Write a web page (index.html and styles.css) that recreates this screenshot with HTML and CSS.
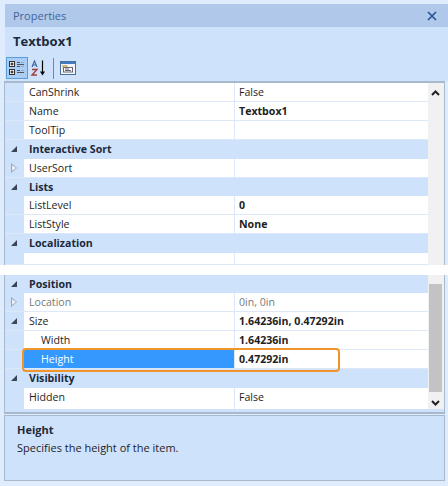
FILE: index.html
```html
<!DOCTYPE html>
<html>
  <head>
    <title>Properties</title>
    <link rel="stylesheet" href="styles.css">
  </head>
  <body>
    <div class="panel">
      <div class="title-bar">
        <span>Properties</span>
        <svg class="close" width="10" height="10" viewBox="0 0 10 10"><path d="M1 1L9 9M9 1L1 9" stroke="#2a5590" stroke-width="1.7"/></svg>
      </div>
      <div class="object-name">Textbox1</div>
      <div class="toolbar">
        <div class="tool active">
          <svg width="20" height="20" viewBox="0 0 20 20">
            <rect x="2.5" y="3.5" width="5" height="5" fill="#fff" stroke="#333"/>
            <path d="M3.5 6H6.5M5 4.5V7.5" stroke="#000"/>
            <rect x="2.5" y="11.5" width="5" height="5" fill="#fff" stroke="#333"/>
            <path d="M3.5 14H6.5M5 12.5V15.5" stroke="#000"/>
            <path d="M10 4.5H13M10 6.5H17M10 8.5H13M10 12.5H13M10 14.5H17" stroke="#555"/>
            <path d="M14 4.5H17M14 8.5H17M14 12.5H17" stroke="#9ab"/>
          </svg>
        </div>
        <div class="tool">
          <svg width="20" height="20" viewBox="0 0 20 20">
            <path d="M3 9L5.5 3L8 9M4 7H7" fill="none" stroke="#3a5f9e" stroke-width="1.1"/>
            <path d="M3 11.5H8L3 17H8" fill="none" stroke="#a04040" stroke-width="1.4"/>
            <path d="M13.5 2.5V15" stroke="#000" stroke-width="1.2"/>
            <path d="M11 13.5H16L13.5 17.5Z" fill="#000"/>
          </svg>
        </div>
        <div class="tool-sep"></div>
        <div class="tool">
          <svg width="18" height="18" viewBox="0 0 18 18">
            <rect x="1.5" y="2.5" width="15" height="13" fill="#f2f6fb" stroke="#4a6f9f"/>
            <rect x="2" y="3" width="14" height="2" fill="#3f7cc4"/>
            <path d="M3.5 6.5H8V8H3.5Z" fill="#f2d48a" stroke="#b08a3a" stroke-width=".5"/>
            <rect x="4.5" y="8.5" width="9" height="4.5" fill="#fff" stroke="#667"/>
            <path d="M6 10H10M6 11.5H12" stroke="#667"/>
          </svg>
        </div>
      </div>

      <div class="grid">
        <div class="grid-part part-top">
          <div class="rows">
            <div class="row"><div class="margin"></div><div class="name">CanShrink</div><div class="value">False</div></div>
            <div class="row"><div class="margin"></div><div class="name">Name</div><div class="value bold">Textbox1</div></div>
            <div class="row"><div class="margin"></div><div class="name">ToolTip</div><div class="value"></div></div>
            <div class="cat"><div class="margin"><i class="open"></i></div><div class="name">Interactive Sort</div></div>
            <div class="row"><div class="margin"><i class="closed"></i></div><div class="name">UserSort</div><div class="value"></div></div>
            <div class="cat"><div class="margin"><i class="open"></i></div><div class="name">Lists</div></div>
            <div class="row"><div class="margin"></div><div class="name">ListLevel</div><div class="value bold">0</div></div>
            <div class="row"><div class="margin"></div><div class="name">ListStyle</div><div class="value bold">None</div></div>
            <div class="cat"><div class="margin"><i class="open"></i></div><div class="name">Localization</div></div>
            <div class="row cut"><div class="margin"></div><div class="name"></div><div class="value"></div></div>
          </div>
          <div class="scrollbar">
            <svg class="arrow" width="9" height="6" viewBox="0 0 9 6"><path d="M1 5L4.5 1.5L8 5" fill="none" stroke="#222" stroke-width="2"/></svg>
          </div>
        </div>
        <div class="strip"></div>
        <div class="grid-part">
          <div class="rows">
            <div class="cat"><div class="margin"><i class="open"></i></div><div class="name">Position</div></div>
            <div class="row"><div class="margin"><i class="closed"></i></div><div class="name gray">Location</div><div class="value gray">0in, 0in</div></div>
            <div class="row"><div class="margin"><i class="open"></i></div><div class="name">Size</div><div class="value bold">1.64236in, 0.47292in</div></div>
            <div class="row"><div class="margin"></div><div class="name sub">Width</div><div class="value bold">1.64236in</div></div>
            <div class="row selected"><div class="margin"></div><div class="name sub">Height</div><div class="value bold">0.47292in</div><div class="callout"></div></div>
            <div class="cat"><div class="margin"><i class="open"></i></div><div class="name">Visibility</div></div>
            <div class="row last"><div class="margin"></div><div class="name">Hidden</div><div class="value">False</div></div>
          </div>
          <div class="scrollbar">
            <div class="thumb"></div>
            <svg class="arrow" width="9" height="6" viewBox="0 0 9 6"><path d="M1 1L4.5 4.5L8 1" fill="none" stroke="#222" stroke-width="2"/></svg>
          </div>
        </div>
      </div>

      <div class="description">
        <div class="desc-title">Height</div>
        <div>Specifies the height of the item.</div>
      </div>
    </div>
  </body>
</html>
```

FILE: styles.css
```css
html, body {
  margin: 0;
  padding: 0;
}
body {
  width: 448px;
  height: 486px;
  overflow: hidden;
  background-color: #dfecfd;
  font-family: "Open Sans", sans-serif;
  font-size: 11px;
  color: #1e1e1e;
}
.panel {
  padding-top: 4px;
}
.title-bar {
  display: flex;
  justify-content: space-between;
  align-items: center;
  height: 23px;
  margin-left: 5px;
  padding: 0 11px 0 8px;
  background-color: #b0c9eb;
  color: #3f659c;
}
.object-name {
  height: 28px;
  line-height: 28px;
  margin-left: 5px;
  padding-left: 8px;
  background-color: #cfe2fc;
  font-size: 13px;
  font-weight: 700;
  color: #1c2a3a;
}
.toolbar {
  display: flex;
  align-items: center;
  height: 26px;
  margin-left: 5px;
  padding: 0 0 0 1px;
  background-color: #cfe2fc;
}
.tool {
  display: flex;
  align-items: center;
  justify-content: center;
  width: 22px;
  height: 22px;
}
.tool.active {
  background-color: #a9cdf5;
  border: 1px solid #5b9bd8;
  width: 20px;
  height: 20px;
}
.tool-sep {
  width: 1px;
  height: 21px;
  margin: 0 3px;
  background-color: #6c8bab;
}
.grid {
  margin-left: 4px;
  width: 441px;
  box-sizing: border-box;
  border-top: 2px solid #a9b9cd;
  border-left: 1px solid #a9b9cd;
  border-right: 1px solid #a9b9cd;
  border-bottom: 2px solid #a9b9cd;
  padding-bottom: 3px;
  background-color: #cfe2fc;
  font-size: 10.6px;
}
.grid-part {
  display: flex;
}
.rows {
  width: 423px;
}
.row, .cat {
  position: relative;
  display: flex;
  height: 19px;
  line-height: 18px;
  box-sizing: border-box;
}
.row {
  border-bottom: 1px solid #dce8f7;
  background-color: #fff;
}
.cat {
  height: 18.6px;
  background-color: #cfe2fc;
  font-weight: 700;
  color: #1c2a3a;
}
.row.cut {
  height: 12px;
}
.row.last {
  height: 21px;
  border-bottom: 0;
}
.margin {
  flex: none;
  position: relative;
  width: 19px;
  background-color: #cfe2fc;
}
.name {
  flex: none;
  width: 210px;
  box-sizing: border-box;
  padding-left: 5px;
}
.value {
  flex: 1;
  border-left: 1px solid #dce8f7;
  padding-left: 4px;
}
.bold {
  font-weight: 700;
}
.gray {
  color: #77797c;
}
.sub {
  padding-left: 17px;
}
.selected .name {
  background-color: #3399ff;
  color: #fff;
}
.callout {
  position: absolute;
  z-index: 2;
  left: 17px;
  top: -2px;
  width: 318px;
  height: 24px;
  box-sizing: border-box;
  border: 2.5px solid #f0952a;
  border-radius: 4px;
}
.margin i {
  position: absolute;
  left: 6px;
  top: 6px;
}
.open {
  width: 0;
  height: 0;
  border-left: 6px solid transparent;
  border-bottom: 6px solid #3a4656;
}
.margin .closed {
  top: 4px;
  width: 0;
  height: 0;
  border-top: 5px solid transparent;
  border-bottom: 5px solid transparent;
  border-left: 6px solid #9aa5b3;
}
.closed::after {
  content: "";
  position: absolute;
  left: -5px;
  top: -3px;
  border-top: 3px solid transparent;
  border-bottom: 3px solid transparent;
  border-left: 4px solid #e8f1fd;
}
.scrollbar {
  position: relative;
  flex: 1;
  background-color: #f1f1f1;
}
.arrow {
  position: absolute;
  left: 3px;
  top: 7px;
}
.thumb {
  position: absolute;
  left: 1px;
  top: 9px;
  width: 13px;
  height: 108px;
  background-color: #c3c3c3;
}
.thumb + .arrow {
  top: auto;
  bottom: 3px;
}
.strip {
  height: 10px;
  margin: 0 -1px 0 -5px;
  width: 448px;
  background-color: #fff;
}
.description {
  margin: 1px 0 0 4px;
  width: 441px;
  height: 66px;
  box-sizing: border-box;
  padding: 5px 12px;
  border: 1px solid #a9b9cd;
  background-color: #cfe2fc;
  line-height: 18px;
}
.desc-title {
  font-weight: 700;
  color: #1c2a3a;
}
```
